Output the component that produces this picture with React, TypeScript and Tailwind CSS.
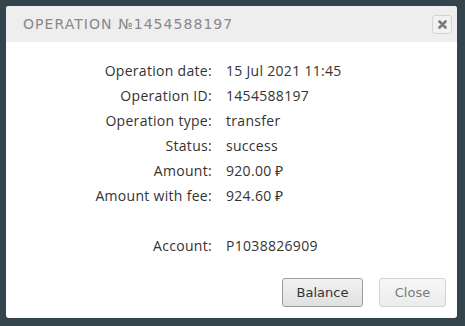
const rows: [string, string][] = [
  ["Operation date:", "15 Jul 2021 11:45"],
  ["Operation ID:", "1454588197"],
  ["Operation type:", "transfer"],
  ["Status:", "success"],
  ["Amount:", "920.00 ₽"],
  ["Amount with fee:", "924.60 ₽"],
];

export default function App() {
  return (
    <div className="w-[465px] h-[326px] bg-[#35444c] p-[6px] pr-[8px] pb-[8px]">
      <div className="flex flex-col h-[312px] w-[451px] bg-white rounded-[3px] overflow-hidden">
        {/* HEADER */}
        <div className="h-[36px] bg-[#eeeeee] flex items-center justify-between pl-[17px] pr-[5px]">
          <h1 className="font-['DejaVu_Sans',sans-serif] text-[14px] tracking-[1.05px] text-[#888888] pt-[1px]">
            OPERATION №1454588197
          </h1>
          <button className="w-[20px] h-[19px] flex items-center justify-center border border-[#d4d4d4] rounded-[3px] bg-[#f2f2f2]">
            <svg width="9" height="9" viewBox="0 0 9 9">
              <path d="M1.5 1.5L7.5 7.5M7.5 1.5L1.5 7.5" stroke="#7a7a7a" strokeWidth="2.6" strokeLinecap="round" />
            </svg>
          </button>
        </div>

        {/* DETAILS */}
        <div className="pt-[16px] grid grid-cols-[206px_1fr] gap-x-[14px] font-['Open_Sans',sans-serif] text-[14px] text-[#333333] tracking-[0.3px]">
          {rows.map(([label, value]) => (
            <div key={label} className="contents">
              <div className="h-[25px] leading-[25px] text-right">{label}</div>
              <div className="h-[25px] leading-[25px]">{value}</div>
            </div>
          ))}
          <div className="h-[25px]" />
          <div className="h-[25px]" />
          <div className="h-[25px] leading-[25px] text-right">Account:</div>
          <div className="h-[25px] leading-[25px]">P1038826909</div>
        </div>

        {/* FOOTER */}
        <div className="mt-auto flex justify-end gap-[16px] pr-[11px] pb-[11px] font-['DejaVu_Sans',sans-serif] text-[13px]">
          <button className="w-[81px] h-[29px] rounded-[3px] border border-[#9c9c9c] bg-gradient-to-b from-[#f2f2f2] to-[#e0e0e0] text-[#333333]">
            Balance
          </button>
          <button className="w-[67px] h-[29px] rounded-[3px] border border-[#d2d2d2] bg-gradient-to-b from-[#f7f7f7] to-[#ececec] text-[#7a7a7a]">
            Close
          </button>
        </div>
      </div>
    </div>
  );
}
